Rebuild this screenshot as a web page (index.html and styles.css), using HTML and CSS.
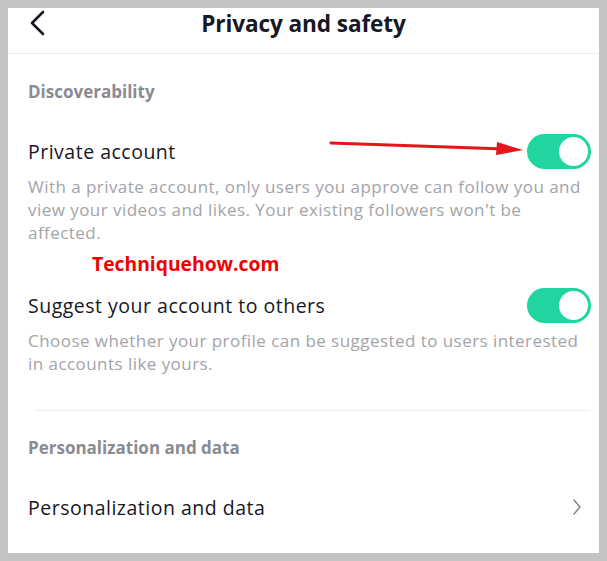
FILE: index.html
```html
<!DOCTYPE html>
<html>
  <head>
    <title>Privacy and safety</title>
    <link rel="stylesheet" href="styles.css">
  </head>
  <body>
    <div class="screen">
      <div class="header">
        <svg class="back" width="20" height="28" viewBox="0 0 20 28">
          <polyline points="15,3 4,14 15,25" fill="none" stroke="#161823" stroke-width="2.6" stroke-linecap="round" stroke-linejoin="round"/>
        </svg>
        <h1>Privacy and safety</h1>
      </div>

      <div class="label first">Discoverability</div>

      <div class="row">
        <span class="row-title">Private account</span>
        <span class="toggle on"><span class="knob"></span></span>
      </div>
      <p class="desc">With a private account, only users you approve can follow you and view your videos and likes. Your existing followers won't be affected.</p>

      <div class="watermark">Techniquehow.com</div>

      <div class="row second">
        <span class="row-title">Suggest your account to others</span>
        <span class="toggle on"><span class="knob"></span></span>
      </div>
      <p class="desc">Choose whether your profile can be suggested to users interested in accounts like yours.</p>

      <div class="divider"></div>

      <div class="label">Personalization and data</div>

      <div class="row link">
        <span class="row-title">Personalization and data</span>
        <svg class="chevron" width="12" height="18" viewBox="0 0 12 18">
          <polyline points="3,2 9,9 3,16" fill="none" stroke="#8a8b91" stroke-width="1.6" stroke-linecap="round" stroke-linejoin="round"/>
        </svg>
      </div>

      <!-- annotation arrow drawn over the screenshot -->
      <svg class="arrow" width="200" height="20" viewBox="0 0 200 20">
        <line x1="2" y1="4" x2="176" y2="10" stroke="#e8141b" stroke-width="3" stroke-linecap="round"/>
        <polygon points="168,3 194,11 167,16" fill="#e8141b"/>
      </svg>
    </div>
  </body>
</html>
```

FILE: styles.css
```css
body {
  margin: 0;
  padding: 8px;
  background: #c3c3c3;
  font-family: "Open Sans", "Liberation Sans", sans-serif;
}

.screen {
  position: relative;
  width: 591px;
  height: 545px;
  background: white;
  display: flex;
  flex-direction: column;
  overflow: hidden;
}

.header {
  height: 45px;
  border-bottom: 1px solid #ececec;
  display: flex;
  align-items: flex-start;
  justify-content: center;
  position: relative;
}

.header h1 {
  margin: 0;
  line-height: 31px;
  font-size: 22.6px;
  font-weight: 700;
  color: #161823;
  letter-spacing: -0.1px;
}

.back {
  position: absolute;
  left: 20px;
  top: 1px;
}

.label {
  margin: 25px 0 0 20px;
  line-height: 24px;
  font-size: 17px;
  font-weight: 700;
  color: #8a8b91;
}

.label.first {
  margin-top: 26px;
}

.row {
  margin: 29px 8px 0 20px;
  height: 36px;
  display: flex;
  align-items: center;
  justify-content: space-between;
}

.row.second {
  margin-top: 11px;
}

.row-title {
  font-size: 19.5px;
  letter-spacing: 0.5px;
  color: #161823;
}

.toggle {
  width: 64px;
  height: 35px;
  border-radius: 18px;
  background: #20d5a0;
  display: flex;
  align-items: center;
  justify-content: flex-end;
  padding: 0 3px;
  box-sizing: border-box;
}

.knob {
  width: 29px;
  height: 29px;
  border-radius: 50%;
  background: white;
}

.desc {
  margin: 6px 12px 0 20px;
  font-size: 17px;
  letter-spacing: 0.45px;
  line-height: 23px;
  color: #a3a4a8;
}

.watermark {
  margin: 8px 0 0 84px;
  line-height: 24px;
  font-size: 19.3px;
  font-weight: 700;
  color: #f00000;
}

.divider {
  margin: 35px 9px 0 27px;
  height: 1px;
  background: #ededed;
}

.row.link .chevron {
  margin-right: 8px;
}

.arrow {
  position: absolute;
  left: 321px;
  top: 131px;
}
```
